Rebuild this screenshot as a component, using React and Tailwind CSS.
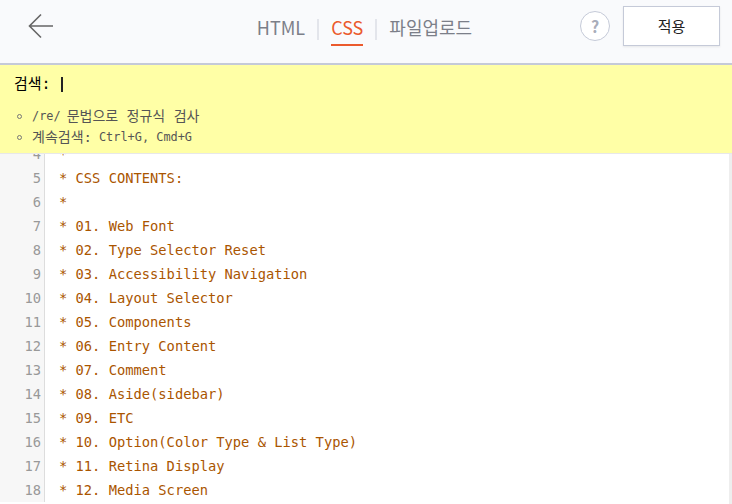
import { useState } from "react";

const mono = "font-['DejaVu_Sans_Mono','Noto_Sans_CJK_KR',monospace]";

const LINES = [
  [4, "*"],
  [5, "* CSS CONTENTS:"],
  [6, "*"],
  [7, "* 01. Web Font"],
  [8, "* 02. Type Selector Reset"],
  [9, "* 03. Accessibility Navigation"],
  [10, "* 04. Layout Selector"],
  [11, "* 05. Components"],
  [12, "* 06. Entry Content"],
  [13, "* 07. Comment"],
  [14, "* 08. Aside(sidebar)"],
  [15, "* 09. ETC"],
  [16, "* 10. Option(Color Type & List Type)"],
  [17, "* 11. Retina Display"],
  [18, "* 12. Media Screen"],
];

function Tab({ label, active }) {
  return (
    <span
      className={`h-[38px] leading-[38px] border-b-2 ${
        active ? "text-[#eb5a2d] border-[#eb5a2d]" : "text-[#7c7f89] border-transparent"
      }`}
    >
      {label}
    </span>
  );
}

function Header() {
  return (
    <header className="h-[65px] shrink-0 bg-[#f9fafc] border-b-2 border-[#c5cad8] grid grid-cols-[1fr_auto_1fr] font-['Noto_Sans_CJK_KR',sans-serif]">
      <div>
        <button className="ml-[28px] mt-[13px] w-[26px] h-[26px] text-[#666]">
          <svg width="26" height="26" viewBox="0 0 26 26" fill="none" stroke="currentColor" strokeWidth="1.6">
            <path d="M25 13H2M13 1.5L1.5 13L13 24.5" />
          </svg>
        </button>
      </div>

      <nav className="flex items-start pt-[8px] pr-[3px] gap-[12px] text-[18px]">
        <Tab label="HTML" />
        <span className="w-[2px] h-[21px] mt-[11px] bg-[#e3e5eb]" />
        <Tab label="CSS" active />
        <span className="w-[2px] h-[21px] mt-[11px] bg-[#e3e5eb]" />
        <Tab label="파일업로드" />
      </nav>

      <div className="flex justify-end items-start">
        <span className="mt-[11px] w-[30px] h-[30px] rounded-full border border-[#c5cad8] bg-white flex items-center justify-center text-[16px] font-bold text-[#a9adba]">
          ?
        </span>
        <button className="ml-[13px] mr-[12px] mt-[6px] w-[97px] h-[40px] bg-white border border-[#c5cad8] shadow-[0_1px_2px_rgba(0,0,0,0.08)] text-[15px] text-[#222]">
          적용
        </button>
      </div>
    </header>
  );
}

function SearchPanel() {
  const [query, setQuery] = useState("");
  return (
    <div className={`h-[89px] shrink-0 bg-[#ffffa6] border-b border-[#e8e8e8] ${mono}`}>
      <div className="flex items-center h-[39px] pl-[14px] text-[15px] text-black">
        <span>검색:</span>
        <span className="ml-[10px] w-[2px] h-[15px] bg-[#222]" />
        <input
          value={query}
          onChange={(e) => setQuery(e.target.value)}
          className="w-[200px] outline-none bg-transparent"
        />
      </div>
      <ul className="mt-[2px] pl-[17px] text-[14px] leading-[21px] text-[#555]">
        <li className="flex items-center">
          <span className="w-[5px] h-[5px] rounded-full border border-[#777] mr-[10px]" />
          <span className="text-[11.9px] mr-[6px]">/re/</span>문법으로 정규식 검사
        </li>
        <li className="flex items-center">
          <span className="w-[5px] h-[5px] rounded-full border border-[#777] mr-[10px]" />
          계속검색:<span className="text-[11.9px] ml-[7px]">Ctrl+G, Cmd+G</span>
        </li>
      </ul>
    </div>
  );
}

function CodeArea() {
  return (
    <div className={`relative flex-1 overflow-hidden bg-white ${mono}`}>
      <div className="-mt-[12px] text-[13.75px] leading-[24px]">
        {LINES.map(([n, text]) => (
          <div key={n} className="flex h-[24px]">
            <span className="w-[45px] shrink-0 pr-[3px] text-right text-[#999] bg-[#f7f7f7] border-r border-[#ddd]">
              {n}
            </span>
            <span className="pl-[14px] whitespace-pre text-[#a50]">{text}</span>
          </div>
        ))}
      </div>
      {/* scrollbar track */}
      <div className="absolute top-0 right-0 bottom-0 w-[3px] bg-[#eeeeee]" />
    </div>
  );
}

export default function App() {
  return (
    <div className="w-[732px] h-[504px] flex flex-col overflow-hidden bg-white">
      <Header />
      <SearchPanel />
      <CodeArea />
    </div>
  );
}
